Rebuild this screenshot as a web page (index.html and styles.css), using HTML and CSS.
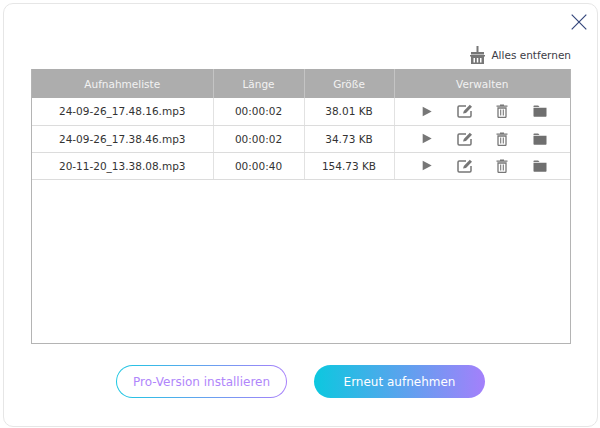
FILE: index.html
```html
<!DOCTYPE html>
<html lang="de">
<head>
<meta charset="utf-8">
<title>Aufnahmeliste</title>
<link rel="stylesheet" href="styles.css">
</head>
<body>
<svg class="defs" width="0" height="0" aria-hidden="true">
  <defs>
    <linearGradient id="outline" x1="0" x2="1" y1="0" y2="0">
      <stop offset="0" stop-color="#1cc8e2"/>
      <stop offset="1" stop-color="#a880fb"/>
    </linearGradient>
    <symbol id="i-play" viewBox="0 0 14 14"><path d="M2 1.5 12.5 7 2 12.5z" fill="#777"/></symbol>
    <symbol id="i-edit" viewBox="0 0 16 14"><path d="M9 2H2.2Q1 2 1 3.2v8.6Q1 13 2.2 13h10.6q1.200 0 1.200-1.200V7" fill="none" stroke="#777" stroke-width="1.500"/><path d="M6 9.500 6.800 7 12.800.7 15 2.700 9 9z" fill="#777"/></symbol>
    <symbol id="i-trash" viewBox="0 0 12 14"><path d="M4 1.500V.5h4v1h3.500v1.200H.5V1.500z" fill="#777"/><path d="M2 4h8v8.500q0 1-1 1H3q-1 0-1-1z" fill="none" stroke="#777" stroke-width="1.300"/><path d="M4.700 5.500v6M7.300 5.500v6" stroke="#777" stroke-width="1.100"/></symbol>
    <symbol id="i-folder" viewBox="0 0 14 12"><path d="M.5 1.200Q.5.500 1.200.500h4L6.500 2h-6z" fill="#777"/><path d="M.5 2.800h13.000V11q0 .7-.7.700H1.200q-.7 0-.7-.7z" fill="#6f6f6f"/></symbol>
  </defs>
</svg>
<main class="window">
  <div class="title-row">
    <button class="close" aria-label="Schließen">
      <svg width="16" height="16" viewBox="0 0 16 16"><path d="M.7.700 15.300 15.300M15.300.700.700 15.300" stroke="#35477c" stroke-width="1.200" fill="none"/></svg>
    </button>
  </div>
  <div class="tool-row">
    <svg class="brush" width="15" height="18" viewBox="0 0 15 18">
      <path d="M6.500 0h2v6h-2z" fill="#777"/>
      <path d="M1 6h13v2.500H1z" fill="#777"/>
      <path d="M0 9h15v1.500h-1V18H1v-7.500H0z" fill="#777"/>
      <path d="M3.500 12v4.500h1.500V12zM6.800 12v4.500h1.500V12zM10 12v4.500h1.500V12z" fill="#fff"/>
    </svg>
    <span class="tool-label">Alles entfernen</span>
  </div>
  <section class="list">
    <table class="rec-table">
      <colgroup><col class="c1"><col class="c2"><col class="c3"><col class="c4"></colgroup>
      <thead>
        <tr><th>Aufnahmeliste</th><th>Länge</th><th>Größe</th><th>Verwalten</th></tr>
      </thead>
      <tbody>
        <tr><td>24-09-26_17.48.16.mp3</td><td>00:00:02</td><td>38.01 KB</td><td class="actions"><div class="icons"><svg class="ic-play"><use href="#i-play"/></svg><svg class="ic-edit"><use href="#i-edit"/></svg><svg class="ic-trash"><use href="#i-trash"/></svg><svg class="ic-folder"><use href="#i-folder"/></svg></div></td></tr>
        <tr><td>24-09-26_17.38.46.mp3</td><td>00:00:02</td><td>34.73 KB</td><td class="actions"><div class="icons"><svg class="ic-play"><use href="#i-play"/></svg><svg class="ic-edit"><use href="#i-edit"/></svg><svg class="ic-trash"><use href="#i-trash"/></svg><svg class="ic-folder"><use href="#i-folder"/></svg></div></td></tr>
        <tr><td>20-11-20_13.38.08.mp3</td><td>00:00:40</td><td>154.73 KB</td><td class="actions"><div class="icons"><svg class="ic-play"><use href="#i-play"/></svg><svg class="ic-edit"><use href="#i-edit"/></svg><svg class="ic-trash"><use href="#i-trash"/></svg><svg class="ic-folder"><use href="#i-folder"/></svg></div></td></tr>
      </tbody>
    </table>
  </section>
  <div class="buttons">
    <button class="btn btn-outline"><span>Pro-Version installieren</span></button>
    <button class="btn btn-fill">Erneut aufnehmen</button>
  </div>
</main>
</body>
</html>
```
FILE: styles.css
```css
* { box-sizing: border-box; }
html, body { margin: 0; padding: 0; }
body {
  width: 600px;
  height: 428px;
  padding: 3px 2px 1px 3px;
  background: #fff;
  font-family: "DejaVu Sans", sans-serif;
  font-size: 11px;
  color: #333;
  overflow: hidden;
}
.defs { position: absolute; }
.window {
  width: 595px;
  height: 424px;
  border: 1px solid #e6e6e6;
  border-radius: 10px;
  background: #fff;
  padding: 10px 27px 0;
  display: flex;
  flex-direction: column;
}
.title-row { display: flex; justify-content: flex-end; height: 16px; margin-right: -17px; }
.close { padding: 0; border: 0; background: none; width: 16px; height: 16px; display: block; }
.close svg { display: block; }
.tool-row {
  height: 18px;
  margin-top: 16px;
  display: flex;
  justify-content: flex-end;
  align-items: center;
  gap: 6px;
  padding-right: 0;
  margin-right: -1px;
}
.brush { display: block; }
.tool-label { font-size: 10.5px; color: #3c3c46; }
.list {
  margin-top: 5px;
  height: 275px;
  border: 1px solid #b4b4b4;
  border-top: 0;
  background: #fff;
  width: 540px;
}
.rec-table { border-collapse: collapse; table-layout: fixed; width: 538px; }
.c1 { width: 181px; }
.c2 { width: 91px; }
.c3 { width: 90px; }
.c4 { width: 176px; }
.rec-table th {
  height: 29px;
  padding: 0;
  background: #adadad;
  color: #f2f2f2;
  font-weight: 400;
  font-size: 10.5px;
  border-left: 1px solid #c4c4c4;
}
.rec-table th:first-child, .rec-table td:first-child { border-left: 0; }
.rec-table td {
  height: 27px;
  padding: 0;
  text-align: center;
  font-size: 10.5px;
  color: #333;
  border-left: 1px solid #e2e2e2;
  border-bottom: 1px solid #dcdcdc;
}
.icons { display: flex; align-items: center; padding-left: 26px; }
.icons svg { display: block; flex: none; }
.ic-play { width: 12px; height: 13px; }
.ic-edit { width: 16px; height: 14px; margin-left: 24px; }
.ic-trash { width: 12px; height: 14px; margin-left: 23px; }
.ic-folder { width: 14px; height: 12px; margin-left: 25px; }
.buttons {
  margin-top: 21px;
  display: flex;
  justify-content: center;
  gap: 27px;
}
.btn {
  width: 171px;
  height: 33px;
  border-radius: 17px;
  font-family: inherit;
  font-size: 12px;
  padding: 0;
  border: 0;
}
.btn-outline {
  border: 1px solid transparent;
  background: linear-gradient(#fff, #fff) padding-box, linear-gradient(90deg, #1cc8e2, #a880fb) border-box;
  color: #b086fb;
}
.btn-fill {
  background: linear-gradient(90deg, #0cc8df, #a480fb);
  color: #fff;
}
```
